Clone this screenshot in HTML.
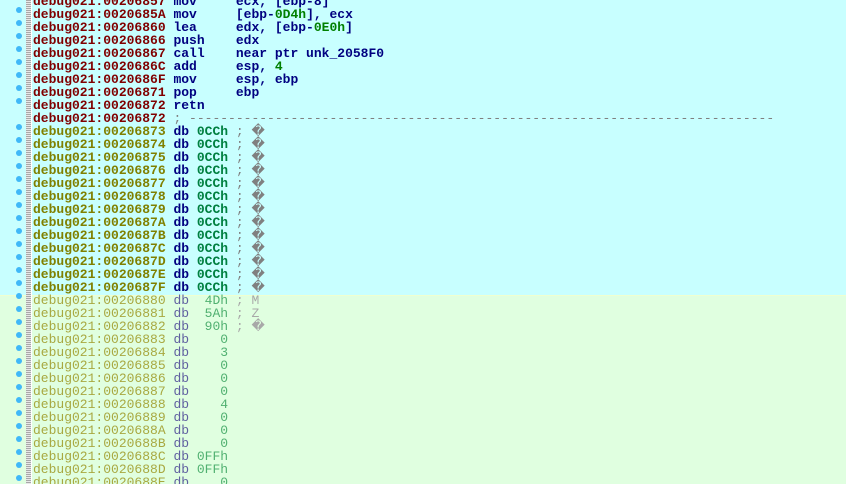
<!DOCTYPE html>
<html style="overflow:hidden;width:846px;height:484px"><head><style>
body{margin:0;width:846px;height:484px;overflow:hidden;background:#c8ffff;position:relative;font-family:"Liberation Mono",monospace;font-size:13px;}
#green{position:absolute;left:0;top:295px;width:846px;height:189px;background:#e0ffe0;border-top:1px solid #f0ffd0;}
#strip{position:absolute;left:26px;top:0;width:5px;height:484px;background:repeating-linear-gradient(#a8a8a8 0 1px,#e8e8e8 1px 2px);border-right:1px solid #fff;}
.dot{position:absolute;left:16px;width:6px;height:6px;border-radius:3px;background:#40b8f8;}
.r{position:absolute;left:33px;height:13px;line-height:13px;white-space:pre;font-weight:bold;}
.a{color:#800000}.o{color:#808000}.m{color:#000080}.n{color:#008000}.c{color:#808080;font-weight:normal}.t{color:#008040}
.g{font-weight:normal}.g .o{color:#a8a840}.g .m{color:#6060a0}.g .n{color:#50b070}.g .c{color:#a8a8a8}
</style></head><body>
<div id="green"></div><div id="strip"></div>
<div id="c"></div>
<script>
var rows=[
['a','00206857','mov     ecx, [ebp-8]',''],
['a','0020685A','mov     [ebp-<span class="n">0D4h</span>], ecx',''],
['a','00206860','lea     edx, [ebp-<span class="n">0E0h</span>]',''],
['a','00206866','push    edx',''],
['a','00206867','call    near ptr unk_2058F0',''],
['a','0020686C','add     esp, <span class="n">4</span>',''],
['a','0020686F','mov     esp, ebp',''],
['a','00206871','pop     ebp',''],
['a','00206872','retn',''],
['a','00206872','<span class="c">; '+'-'.repeat(75)+'</span>','']];
var h='';
for(var i=0;i<rows.length;i++){var r=rows[i];h+='<div class="r" style="top:'+(-5+13*i)+'px"><span class="a">debug021:'+r[1]+'</span> <span class="m">'+r[2]+'</span></div>';}
var cc=['73','74','75','76','77','78','79','7A','7B','7C','7D','7E','7F'];
for(var j=0;j<cc.length;j++){var i=10+j;h+='<div class="r" style="top:'+(-5+13*i)+'px"><span class="o">debug021:002068'+cc[j]+'</span> <span class="m">db</span> <span class="t">0CCh</span> <span class="c">; &#xFFFD;</span></div>';}
var g=[['80',' 4Dh','M'],['81',' 5Ah','Z'],['82',' 90h','&#xFFFD;'],['83','   0'],['84','   3'],['85','   0'],['86','   0'],['87','   0'],['88','   4'],['89','   0'],['8A','   0'],['8B','   0'],['8C','0FFh'],['8D','0FFh'],['8E','   0']];
for(var j=0;j<g.length;j++){var i=23+j;h+='<div class="r g" style="top:'+(-5+13*i)+'px"><span class="o">debug021:002068'+g[j][0]+'</span> <span class="m">db</span> <span class="n">'+g[j][1]+'</span>'+(g[j][2]?' <span class="c">; '+g[j][2]+'</span>':'')+'</div>';}
for(var k=0;k<8;k++)h+='<div class="dot" style="top:'+(7+13*k)+'px"></div>';
for(var y=124;y<480;y+=13)h+='<div class="dot" style="top:'+y+'px"></div>';
document.getElementById('c').innerHTML=h;
</script>
</body></html>
